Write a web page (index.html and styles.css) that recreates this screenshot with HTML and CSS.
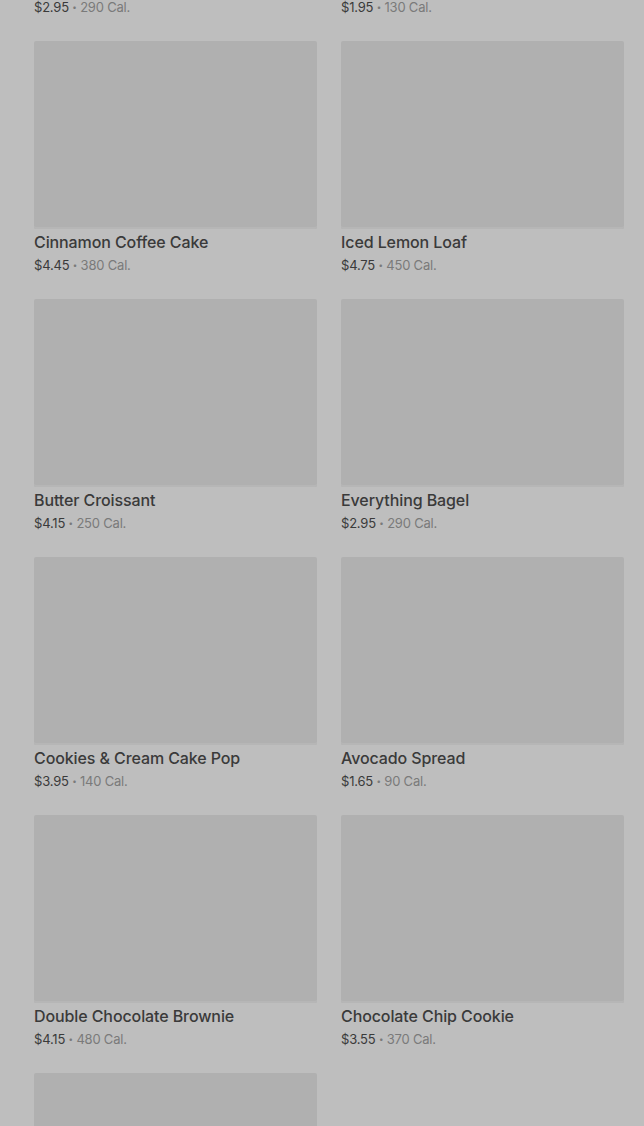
FILE: index.html
```html
<!DOCTYPE html>
<html lang="en">
<head>
<meta charset="utf-8">
<title>Menu</title>
<link rel="stylesheet" href="styles.css">
</head>
<body>
<main class="grid">
  <div class="card card-cut"><p class="meta"><span class="price">$2.95</span> <span class="dot">•</span> <span class="cal">290 Cal.</span></p></div>
  <div class="card card-cut"><p class="meta"><span class="price">$1.95</span> <span class="dot">•</span> <span class="cal">130 Cal.</span></p></div>

  <div class="card"><div class="thumb"></div><h3 class="name">Cinnamon Coffee Cake</h3><p class="meta"><span class="price">$4.45</span> <span class="dot">•</span> <span class="cal">380 Cal.</span></p></div>
  <div class="card"><div class="thumb"></div><h3 class="name">Iced Lemon Loaf</h3><p class="meta"><span class="price">$4.75</span> <span class="dot">•</span> <span class="cal">450 Cal.</span></p></div>

  <div class="card"><div class="thumb"></div><h3 class="name">Butter Croissant</h3><p class="meta"><span class="price">$4.15</span> <span class="dot">•</span> <span class="cal">250 Cal.</span></p></div>
  <div class="card"><div class="thumb"></div><h3 class="name">Everything Bagel</h3><p class="meta"><span class="price">$2.95</span> <span class="dot">•</span> <span class="cal">290 Cal.</span></p></div>

  <div class="card"><div class="thumb"></div><h3 class="name">Cookies &amp; Cream Cake Pop</h3><p class="meta"><span class="price">$3.95</span> <span class="dot">•</span> <span class="cal">140 Cal.</span></p></div>
  <div class="card"><div class="thumb"></div><h3 class="name">Avocado Spread</h3><p class="meta"><span class="price">$1.65</span> <span class="dot">•</span> <span class="cal">90 Cal.</span></p></div>

  <div class="card"><div class="thumb"></div><h3 class="name">Double Chocolate Brownie</h3><p class="meta"><span class="price">$4.15</span> <span class="dot">•</span> <span class="cal">480 Cal.</span></p></div>
  <div class="card"><div class="thumb"></div><h3 class="name">Chocolate Chip Cookie</h3><p class="meta"><span class="price">$3.55</span> <span class="dot">•</span> <span class="cal">370 Cal.</span></p></div>

  <div class="card"><div class="thumb"></div></div>
</main>
</body>
</html>
```

FILE: styles.css
```css
html, body {
  margin: 0;
  padding: 0;
  background: #bebebe;
  height: 1126px;
  overflow: hidden;
}
body {
  font-family: Inter, "Noto Sans", sans-serif;
  color: #383838;
}
.grid {
  display: grid;
  grid-template-columns: 283px 283px;
  column-gap: 24px;
  row-gap: 25px;
  padding-left: 34px;
}
.card {
  display: flex;
  flex-direction: column;
}
.card-cut .meta {
  margin: 0;
  line-height: 14px;
  height: 14px;
  padding-bottom: 2px;
}
.thumb {
  height: 188px;
  background: #b0b0b0;
  border-radius: 2px;
  box-shadow: inset 0 -2px 0 #b6b6b6;
}
.name {
  margin: 2px 0 0;
  font-size: 16px;
  font-weight: 500;
  line-height: 22px;
  height: 22px;
  color: #3a3a3a;
  letter-spacing: -0.1px;
}
.meta {
  margin: 3px 0 0;
  font-size: 13px;
  line-height: 18px;
  height: 18px;
  color: #7a7a7a;
  letter-spacing: -0.2px;
}
.price {
  color: #3a3a3a;
}
.dot {
  display: inline-block;
  font-size: 8px;
  line-height: 0;
  vertical-align: 2px;
  color: #7a7a7a;
}
```
